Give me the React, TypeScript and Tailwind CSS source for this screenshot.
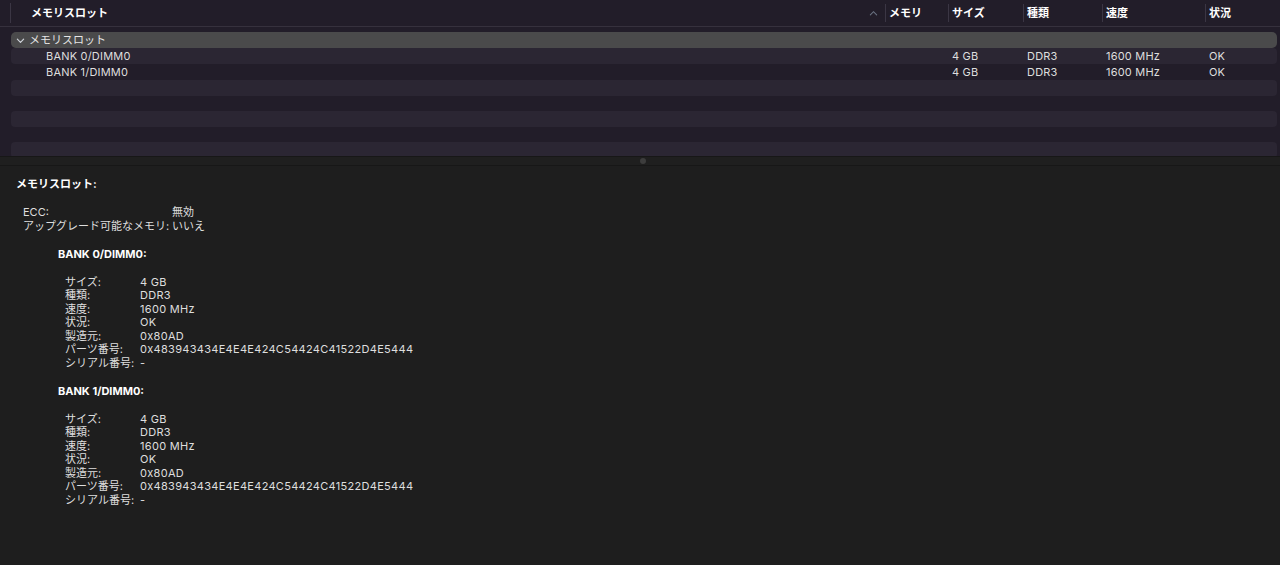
import React from 'react';

const font = { fontFamily: 'Inter, "Noto Sans CJK JP", sans-serif' };

const banks = ['BANK 0/DIMM0', 'BANK 1/DIMM0'];

const details = [
  ['サイズ:', '4 GB'],
  ['種類:', 'DDR3'],
  ['速度:', '1600 MHz'],
  ['状況:', 'OK'],
  ['製造元:', '0x80AD'],
  ['パーツ番号:', '0x483943434E4E4E424C54424C41522D4E5444'],
  ['シリアル番号:', '-'],
];

function Chevron() {
  return (
    <svg width="9" height="9" viewBox="0 0 10 10" className="text-gray-300">
      <path d="M1.5 3.5 L5 7 L8.5 3.5" fill="none" stroke="currentColor" strokeWidth="1.3" strokeLinecap="round" strokeLinejoin="round" />
    </svg>
  );
}

function DataRow({ name, alt }: { name: string; alt: boolean }) {
  return (
    <div className={`flex h-4 items-center rounded-[4px] tracking-[0.2px] ${alt ? 'bg-[#2b2633]' : ''}`}>
      <div className="w-[874px] pl-[35px]">{name}</div>
      <div className="w-[67px]"></div>
      <div className="w-[75px]">4 GB</div>
      <div className="w-[79px]">DDR3</div>
      <div className="w-[103px]">1600 MHz</div>
      <div>OK</div>
    </div>
  );
}

function HeaderCell({ label, w, sep = true }: { label: string; w: string; sep?: boolean }) {
  return (
    <div className={`flex h-full items-center ${w}`}>
      {sep && <div className="h-[18px] w-px bg-[#3b3644]" />}
      <span className="pl-[3px]">{label}</span>
    </div>
  );
}

export default function App() {
  return (
    <div className="flex h-[565px] w-[1280px] flex-col overflow-hidden bg-[#1e1e1e] text-[11px] text-[#dedede]" style={font}>
      {/* top table */}
      <div className="h-[156px] bg-[#221d29]">
        <div className="flex h-[27px] items-center border-b border-[#36313d] font-bold text-white">
          <div className="ml-[10px] h-[20px] w-px bg-[#3b3644]" />
          <div className="flex w-[874px] items-center justify-between pl-[20px] pr-[7px]">
            <span>メモリスロット</span>
            <svg width="9" height="9" viewBox="0 0 10 10" className="text-gray-500">
              <path d="M1.5 6.5 L5 3 L8.5 6.5" fill="none" stroke="currentColor" strokeWidth="1.2" strokeLinecap="round" />
            </svg>
          </div>
          <HeaderCell label="メモリ" w="w-[63px]" />
          <HeaderCell label="サイズ" w="w-[75px]" />
          <HeaderCell label="種類" w="w-[79px]" />
          <HeaderCell label="速度" w="w-[103px]" />
          <HeaderCell label="状況" w="w-[60px]" />
        </div>
        <div className="mt-[5px] flex flex-col pl-[11px] pr-[3px]">
          <div className="flex h-4 items-center gap-[4px] rounded-[5px] bg-[#4a4a4b] pl-[5px] text-[#e6e6e6]">
            <Chevron />
            <span>メモリスロット</span>
          </div>
          {banks.map((b, i) => (
            <DataRow key={b} name={b} alt={i % 2 === 0} />
          ))}
          {[0, 1, 2, 3, 4, 5].map((i) => (
            <div key={i} className={`h-[15.5px] rounded-[4px] ${i % 2 === 0 ? 'bg-[#2b2633]' : ''}`} />
          ))}
        </div>
      </div>
      {/* splitter */}
      <div className="flex h-[10px] items-center justify-center border-y border-[#171717] bg-[#1f1f1f]">
        <div className="ml-[6px] h-[6px] w-[6px] rounded-full bg-[#3d3d3d]" />
      </div>
      {/* detail */}
      <div className="flex-1 pl-[16px] pt-[12px] leading-[13.5px]">
        <div className="font-bold text-white">メモリスロット:</div>
        <div className="mt-[14.5px] pl-[7px]">
          <div className="flex">
            <span className="w-[149px]">ECC:</span>
            <span>無効</span>
          </div>
          <div className="flex">
            <span className="w-[149px]">アップグレード可能なメモリ:</span>
            <span>いいえ</span>
          </div>
        </div>
        {banks.map((b) => (
          <div key={b} className="mt-[14.5px] pl-[42px]">
            <div className="font-bold text-white">{b}:</div>
            <div className="mt-[14.5px] pl-[7px]">
              {details.map(([k, v]) => (
                <div key={k} className="flex">
                  <span className="w-[75px]">{k}</span>
                  <span className="tracking-[0.3px]">{v}</span>
                </div>
              ))}
            </div>
          </div>
        ))}
      </div>
    </div>
  );
}
